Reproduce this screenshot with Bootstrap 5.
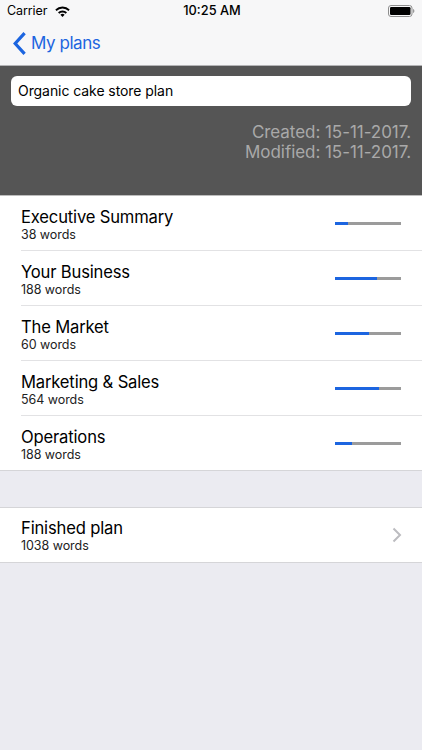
<!DOCTYPE html>
<html lang="en"><head><meta charset="utf-8">
<link href="https://cdn.jsdelivr.net/npm/bootstrap@5.3.0/dist/css/bootstrap.min.css" rel="stylesheet">
<style>
html,body{height:100%}
body{background:#ebebf1;font-family:Inter,"Liberation Sans",sans-serif;color:#000;overflow:hidden}
.topbar{background:#f7f7f8;height:66px;border-bottom:1px solid #b4b4b6}
.statusrow{height:22px;padding:0 7px;font-size:12.5px;line-height:22px;position:relative}
.statusclock{font-weight:500;font-size:12.8px;letter-spacing:0;padding-left:2px}
.carrier{font-size:12.5px;letter-spacing:-.1px}
.navrow{height:43px;padding-left:13px;color:#1c65e0;font-size:17px;letter-spacing:-.45px}
.navlabel{margin-left:5px}
.planhead{background:#555;height:130px;padding:10px 11px 0;border-bottom:1px solid #bdbdbd}
.plantitle{height:30px;background:#fff;border-radius:6px;padding:0 7px;line-height:29px;font-size:14px;letter-spacing:-.07px}
.plandates{color:#a9a9a9;font-size:17px;line-height:20px;margin-top:16px;text-align:right;letter-spacing:-.05px}
.plansheet{background:#fff;padding:0;margin:0;list-style:none}
.sheetrow{height:55px;margin-left:21px;padding-right:21px;border-bottom:1px solid #e2e2e4}
.sheetrow:last-child{margin-left:0;padding-left:21px;border-bottom-color:#d5d5d8;height:55px}
.rowname{font-size:16.6px;line-height:20px;letter-spacing:-.17px;padding-top:2px}
.rowcount{font-size:12.5px;line-height:15px;letter-spacing:-.05px;color:#222}
.meter{width:66px;height:3px;background:#9b9b9b;flex:none}
.meterfill{height:3px;background:#1c65e0}
.finalsheet{margin-top:36px;border-top:1px solid #d5d5d8}
.finalsheet .rowname{padding-top:0}
.nextmark{margin-right:-1px}
</style></head>
<body>
<div class="topbar">
 <div class="statusrow d-flex align-items-center">
  <span class="carrier">Carrier</span>
  <svg class="ms-2" width="15" height="11" viewBox="0 0 15 11" aria-hidden="true"><path d="M.3 3.500a10.300 10.300 0 0 1 14.400 0l-1.200 1.500a8.400 8.400 0 0 0-12 0z" fill="#000"/><path d="M3 6.300a6.500 6.500 0 0 1 9 0l-1.300 1.400a4.600 4.600 0 0 0-6.400 0z" fill="#000"/><path d="M5.400 8.700a3 3 0 0 1 4.200 0L7.500 10.900z" fill="#000"/></svg>
  <span class="statusclock position-absolute top-0 start-50 translate-middle-x">10:25 AM</span>
  <svg class="ms-auto me-0" width="27" height="12" viewBox="0 0 27 12" aria-hidden="true"><rect x=".5" y=".5" width="23.500" height="11" rx="2.500" fill="none" stroke="#8e8e8e"/><rect x="2" y="2" width="20.500" height="8" rx="1.200" fill="#000"/><path d="M25 4v4c.9-.2 1.400-1 1.400-2s-.5-1.800-1.400-2z" fill="#9a9a9a"/></svg>
 </div>
 <div class="navrow d-flex align-items-center">
  <svg width="13" height="23" viewBox="0 0 13 23" aria-hidden="true"><path d="M11.600 1.200 2.200 11.500l9.400 10.300" fill="none" stroke="#1c65e0" stroke-width="3.200"/></svg>
  <span class="navlabel">My plans</span>
 </div>
</div>
<div class="planhead">
 <div class="plantitle">Organic cake store plan</div>
 <div class="plandates">Created: 15-11-2017.<br>Modified: 15-11-2017.</div>
</div>
<ul class="plansheet">
 <li class="sheetrow d-flex align-items-center justify-content-between"><div><div class="rowname">Executive Summary</div><div class="rowcount">38 words</div></div><div class="meter"><div class="meterfill" style="width:20%"></div></div></li>
 <li class="sheetrow d-flex align-items-center justify-content-between"><div><div class="rowname">Your Business</div><div class="rowcount">188 words</div></div><div class="meter"><div class="meterfill" style="width:64%"></div></div></li>
 <li class="sheetrow d-flex align-items-center justify-content-between"><div><div class="rowname">The Market</div><div class="rowcount">60 words</div></div><div class="meter"><div class="meterfill" style="width:51%"></div></div></li>
 <li class="sheetrow d-flex align-items-center justify-content-between"><div><div class="rowname">Marketing &amp; Sales</div><div class="rowcount">564 words</div></div><div class="meter"><div class="meterfill" style="width:67%"></div></div></li>
 <li class="sheetrow d-flex align-items-center justify-content-between"><div><div class="rowname">Operations</div><div class="rowcount">188 words</div></div><div class="meter"><div class="meterfill" style="width:25%"></div></div></li>
</ul>
<ul class="plansheet finalsheet">
 <li class="sheetrow d-flex align-items-center justify-content-between"><div><div class="rowname">Finished plan</div><div class="rowcount">1038 words</div></div>
 <svg class="nextmark" width="10" height="16" viewBox="0 0 10 16" aria-hidden="true"><path d="M1.500 1.500 8 8l-6.500 6.500" fill="none" stroke="#bcbcc0" stroke-width="2"/></svg></li>
</ul>
</body></html>
